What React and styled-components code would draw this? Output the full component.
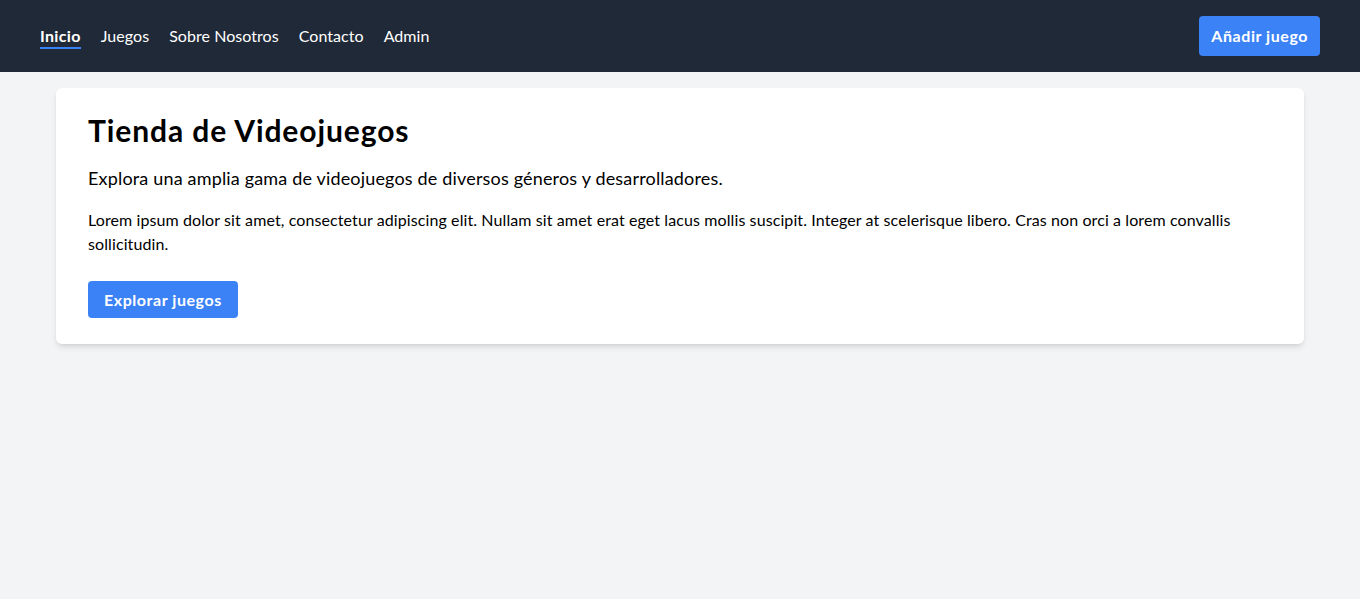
import React from "react";
import styled, { createGlobalStyle } from "styled-components";

const Global = createGlobalStyle`
  * { box-sizing: border-box; }
  html, body { margin: 0; padding: 0; }
  body {
    background: #f3f4f6;
    font-family: Lato, "Noto Sans", sans-serif;
    color: #000;
  }
`;

const NavBar = styled.nav`
  height: 72px;
  background: #1f2937;
  display: flex;
  align-items: center;
  justify-content: space-between;
  padding: 0 40px;
`;

const Links = styled.ul`
  list-style: none;
  margin: 0;
  padding: 0;
  display: flex;
  gap: 20px;
`;

const NavLink = styled.a`
  color: #fff;
  font-size: 16px;
  line-height: 22px;
  text-decoration: none;
  font-weight: ${(p) => (p.$active ? 700 : 400)};
  letter-spacing: ${(p) => (p.$active ? "0.35px" : "0.05px")};
  border-bottom: 2px solid ${(p) => (p.$active ? "#3b82f6" : "transparent")};
  display: inline-block;
  padding-top: 2px;
`;

const Button = styled.button`
  background: #3b82f6;
  color: #fff;
  border: none;
  border-radius: 4px;
  font-family: inherit;
  font-weight: 700;
  font-size: 16px;
  letter-spacing: 0.55px;
  line-height: ${(p) => (p.$size === "lg" ? "24px" : "23px")};
  padding: ${(p) => (p.$size === "lg" ? "8px 12px" : "7px 16px")};
  cursor: pointer;
`;

const Container = styled.main`
  max-width: 1280px;
  margin: 0 auto;
  padding: 16px 16px;
`;

const Card = styled.section`
  background: #fff;
  border-radius: 6px;
  box-shadow: 0 4px 6px -1px rgba(0, 0, 0, 0.1), 0 2px 4px -2px rgba(0, 0, 0, 0.1);
  padding: 24px 32px 26px;
`;

const Title = styled.h1`
  margin: 0 0 16px;
  font-size: 30px;
  line-height: 36px;
  font-weight: 700;
  letter-spacing: 0.9px;
`;

const Lead = styled.p`
  margin: 0 0 16px;
  font-size: 18px;
  line-height: 28px;
  letter-spacing: 0.17px;
`;

const Body = styled.p`
  margin: 0 0 25px;
  font-size: 16px;
  line-height: 24px;
  letter-spacing: 0.1px;
`;

export default function App() {
  const links = ["Inicio", "Juegos", "Sobre Nosotros", "Contacto", "Admin"];
  return (
    <>
      <Global />
      <NavBar>
        <Links>
          {links.map((l, i) => (
            <li key={l}>
              <NavLink href="#" $active={i === 0}>
                {l}
              </NavLink>
            </li>
          ))}
        </Links>
        <Button $size="lg">Añadir juego</Button>
      </NavBar>
      <Container>
        <Card>
          <Title>Tienda de Videojuegos</Title>
          <Lead>
            Explora una amplia gama de videojuegos de diversos géneros y desarrolladores.
          </Lead>
          <Body>
            Lorem ipsum dolor sit amet, consectetur adipiscing elit. Nullam sit amet erat eget
            lacus mollis suscipit. Integer at scelerisque libero. Cras non orci a lorem convallis
            sollicitudin.
          </Body>
          <Button>Explorar juegos</Button>
        </Card>
      </Container>
    </>
  );
}
